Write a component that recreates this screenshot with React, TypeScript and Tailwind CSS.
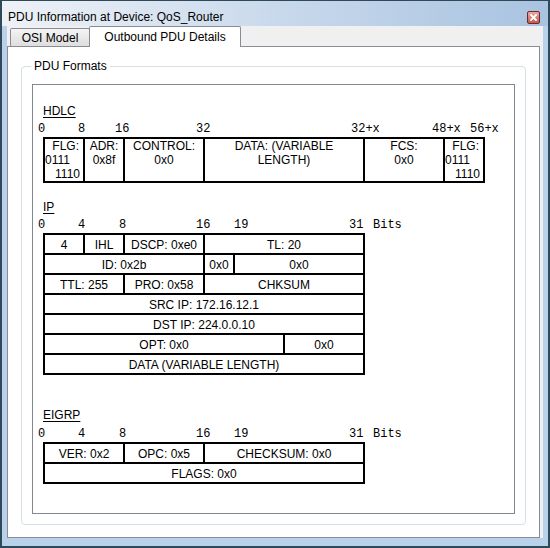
import React from 'react';

type Field = { w: string; text: string };
type Tick = { t: string; c: string };

const hdlcTicks: Tick[] = [
  { t: '0', c: 'left-[-5px]' },
  { t: '8', c: 'left-[35px]' },
  { t: '16', c: 'left-[72px]' },
  { t: '32', c: 'left-[153px]' },
  { t: '32+x', c: 'left-[308px]' },
  { t: '48+x', c: 'left-[389px]' },
  { t: '56+x', c: 'left-[427px]' },
];

const wordTicks: Tick[] = [
  { t: '0', c: 'left-[-5px]' },
  { t: '4', c: 'left-[35px]' },
  { t: '8', c: 'left-[76px]' },
  { t: '16', c: 'left-[153px]' },
  { t: '19', c: 'left-[191px]' },
  { t: '31', c: 'left-[306px]' },
  { t: 'Bits', c: 'left-[330px]' },
];

const ipRows: Field[][] = [
  [
    { w: 'w-[40px]', text: '4' },
    { w: 'w-[40px]', text: 'IHL' },
    { w: 'w-[80px]', text: 'DSCP: 0xe0' },
    { w: 'w-[160px]', text: 'TL: 20' },
  ],
  [
    { w: 'w-[160px]', text: 'ID: 0x2b' },
    { w: 'w-[30px]', text: '0x0' },
    { w: 'w-[130px]', text: '0x0' },
  ],
  [
    { w: 'w-[80px]', text: 'TTL: 255' },
    { w: 'w-[80px]', text: 'PRO: 0x58' },
    { w: 'w-[160px]', text: 'CHKSUM' },
  ],
  [{ w: 'w-[320px]', text: 'SRC IP: 172.16.12.1' }],
  [{ w: 'w-[320px]', text: 'DST IP: 224.0.0.10' }],
  [
    { w: 'w-[240px]', text: 'OPT: 0x0' },
    { w: 'w-[80px]', text: '0x0' },
  ],
  [{ w: 'w-[320px]', text: 'DATA (VARIABLE LENGTH)' }],
];

const eigrpRows: Field[][] = [
  [
    { w: 'w-[80px]', text: 'VER: 0x2' },
    { w: 'w-[80px]', text: 'OPC: 0x5' },
    { w: 'w-[160px]', text: 'CHECKSUM: 0x0' },
  ],
  [{ w: 'w-[320px]', text: 'FLAGS: 0x0' }],
];

function SectionTitle({ children, className }: { children: React.ReactNode; className?: string }) {
  return <div className={`h-[14px] leading-[14px] underline underline-offset-2 ${className ?? ''}`}>{children}</div>;
}

function TickRow({ ticks, className }: { ticks: Tick[]; className?: string }) {
  return (
    <div className={`relative h-[14px] font-['Liberation_Mono',monospace] text-[12px] leading-[14px] ${className ?? ''}`}>
      {ticks.map((k) => (
        <span key={k.t} className={`absolute top-0 whitespace-pre ${k.c}`}>
          {k.t}
        </span>
      ))}
    </div>
  );
}

function WordTable({ rows }: { rows: Field[][] }) {
  return (
    <div className="mt-px w-fit border-r-2 border-b-2 border-black">
      {rows.map((row, i) => (
        <div key={i} className="flex">
          {row.map((f, j) => (
            <div
              key={j}
              className={`${f.w} flex h-[20px] items-center justify-center whitespace-nowrap border-t-2 border-l-2 border-black pt-px`}
            >
              {f.text}
            </div>
          ))}
        </div>
      ))}
    </div>
  );
}

function FlagCell() {
  return (
    <div className="w-[40px] border-l-2 border-black">
      <div className="pr-[4px] text-right">FLG:</div>
      <div className="text-left">0111</div>
      <div className="pr-[3px] text-right">1110</div>
    </div>
  );
}

function HdlcTable() {
  return (
    <div className="mt-px flex w-fit border-t-2 border-r-2 border-b-2 border-black">
      <FlagCell />
      <div className="w-[40px] border-l-2 border-black text-center">
        ADR:
        <br />
        0x8f
      </div>
      <div className="w-[80px] border-l-2 border-black text-center">
        CONTROL:
        <br />
        0x0
      </div>
      <div className="w-[160px] border-l-2 border-black text-center">
        DATA: (VARIABLE
        <br />
        LENGTH)
      </div>
      <div className="w-[80px] border-l-2 border-black text-center">
        FCS:
        <br />
        0x0
      </div>
      <FlagCell />
    </div>
  );
}

function CloseButton() {
  return (
    <div className="mt-[10px] flex h-[13px] w-[13px] items-center justify-center rounded-[2px] border border-[#6e2a26] bg-linear-to-b from-[#e9aaa4] to-[#c2584f]">
      <svg width="7" height="7" viewBox="0 0 7 7">
        <path d="M1 1 L6 6 M6 1 L1 6" stroke="#ffffff" strokeWidth="1.8" strokeLinecap="square" />
      </svg>
    </div>
  );
}

export default function App() {
  return (
    <div className="flex h-[548px] w-[550px] flex-col border-2 border-t border-[#2e4a58] bg-[#b9d1ea] font-['Liberation_Sans',Arial,sans-serif] text-[12px] text-black">
      {/* Title bar */}
      <div className="flex h-[25px] items-start justify-between bg-linear-to-r from-[#eef2f7] via-[#c9d9ec] to-[#a9c3e0] pr-[8px] pl-[6px]">
        <div className="pt-[9px] leading-[14px]">PDU Information at Device: QoS_Router</div>
        <CloseButton />
      </div>

      <div className="flex flex-1 flex-col px-[5px] pb-[8px]">
        <div className="flex flex-1 flex-col bg-[#f0f0f0] pr-[3px]">
          {/* Tabs */}
          <div className="flex h-[20px] items-end pl-[3px]">
            <div className="h-[18px] w-[80px] rounded-t-[2px] border border-b-0 border-[#898c95] bg-linear-to-b from-[#f4f4f4] to-[#dedede] pt-[2px] text-center leading-[14px]">
              OSI Model
            </div>
            <div className="relative z-10 -mb-px -ml-px h-[21px] w-[152px] rounded-t-[2px] border border-b-0 border-[#898c95] bg-white pt-[3px] text-center leading-[14px]">
              Outbound PDU Details
            </div>
          </div>

          {/* Tab panel */}
          <div className="flex flex-1 flex-col border border-[#898c95] bg-white px-[13px] pt-[12px] pb-[12px]">
            <fieldset className="flex flex-1 flex-col rounded-[4px] border border-[#d5dfe5] px-[10px] pt-[11px] pb-[10px]">
              <legend className="ml-[-1px] px-[3px] leading-[14px]">PDU Formats</legend>
              <div className="flex-1 border border-[#828790] bg-white pt-[19px] pl-[10px] leading-[14px]">
                {/* HDLC */}
                <SectionTitle>HDLC</SectionTitle>
                <TickRow ticks={hdlcTicks} className="mt-[4px]" />
                <HdlcTable />

                {/* IP */}
                <SectionTitle className="mt-[17px]">IP</SectionTitle>
                <TickRow ticks={wordTicks} className="mt-[4px]" />
                <WordTable rows={ipRows} />

                {/* EIGRP */}
                <SectionTitle className="mt-[33px]">EIGRP</SectionTitle>
                <TickRow ticks={wordTicks} className="mt-[5px]" />
                <WordTable rows={eigrpRows} />
              </div>
            </fieldset>
          </div>
        </div>
      </div>
    </div>
  );
}
